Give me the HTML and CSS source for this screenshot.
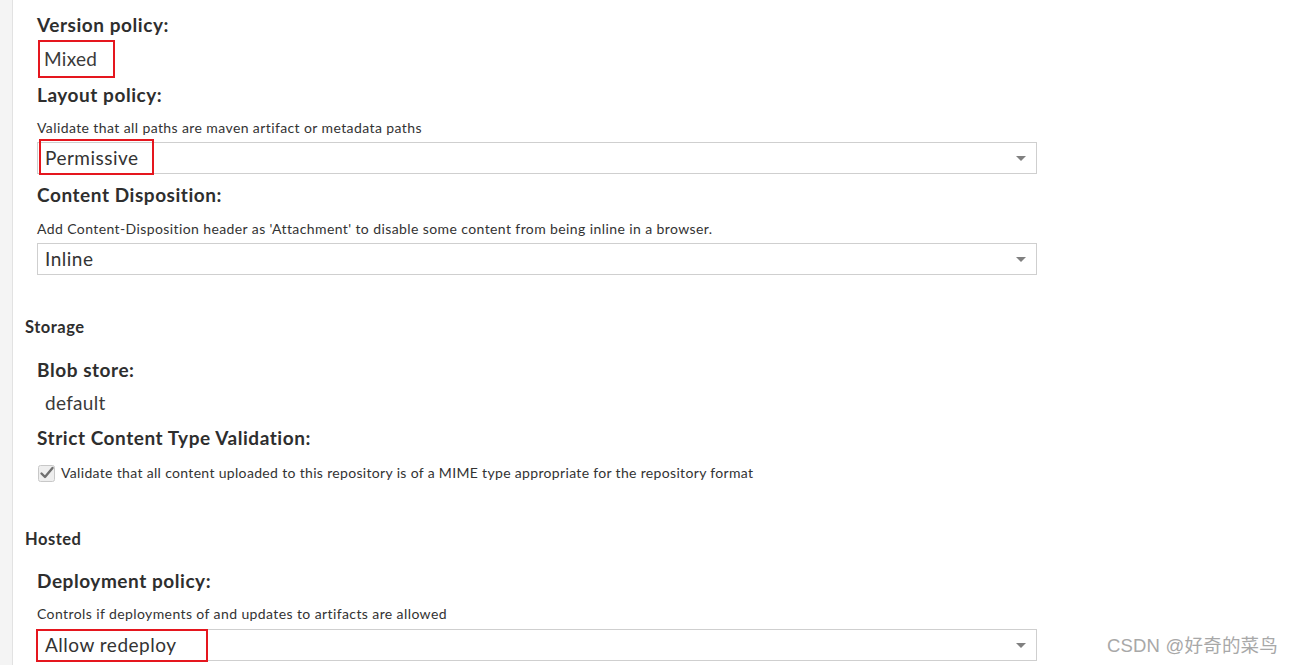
FILE: index.html
```html
<!DOCTYPE html>
<html>
<head>
<meta charset="utf-8">
<link rel="stylesheet" href="styles.css">
</head>
<body>
<div class="page">
  <div class="rail"></div>
  <div class="main">
    <div class="field f-version">
      <div class="label">Version policy:</div>
      <div class="static boxed">Mixed</div>
    </div>
    <div class="field f-layout">
      <div class="label">Layout policy:</div>
      <div class="desc">Validate that all paths are maven artifact or metadata paths</div>
      <div class="select"><span class="sel-text">Permissive</span><span class="arrow"></span><span class="mark mark-perm"></span></div>
    </div>
    <div class="field f-disp">
      <div class="label">Content Disposition:</div>
      <div class="desc">Add Content-Disposition header as 'Attachment' to disable some content from being inline in a browser.</div>
      <div class="select"><span class="sel-text">Inline</span><span class="arrow"></span></div>
    </div>

    <div class="section s-storage">Storage</div>
    <div class="field f-blob">
      <div class="label">Blob store:</div>
      <div class="static">default</div>
    </div>
    <div class="field f-strict">
      <div class="label">Strict Content Type Validation:</div>
      <div class="check-row">
        <svg class="check" width="17" height="17" viewBox="0 0 17 17"><rect x="0.5" y="0.5" width="16" height="16" rx="2" fill="#eeeeee" stroke="#c8c8c8"/><path d="M3.5 8.5 L7 12 L14.5 3" fill="none" stroke="#6f6f6f" stroke-width="2.4" stroke-linecap="round" stroke-linejoin="round"/></svg>
        <span class="check-text">Validate that all content uploaded to this repository is of a MIME type appropriate for the repository format</span>
      </div>
    </div>

    <div class="section s-hosted">Hosted</div>
    <div class="field f-deploy">
      <div class="label">Deployment policy:</div>
      <div class="desc">Controls if deployments of and updates to artifacts are allowed</div>
      <div class="select"><span class="sel-text">Allow redeploy</span><span class="arrow"></span><span class="mark mark-deploy"></span></div>
    </div>
  </div>
  <div class="watermark">CSDN @好奇的菜鸟</div>
</div>
</body>
</html>
```
FILE: styles.css
```css
* { box-sizing: border-box; }
html, body { margin: 0; padding: 0; background: #fff; }
body {
  font-family: Lato, "Noto Sans", "Noto Sans CJK SC", sans-serif;
  color: #333;
  width: 1294px;
  height: 665px;
  overflow: hidden;
}
.page { display: flex; height: 665px; position: relative; }
.rail {
  width: 13px;
  flex: none;
  background: #f4f4f4;
  border-right: 1px solid #e2e2e2;
}
.main { flex: 1; padding-top: 13px; }
.field { padding-left: 24px; }
.label {
  font-size: 19px;
  font-weight: 700;
  line-height: 24px;
  letter-spacing: 0.55px;
  color: #2e2e2e;
}
.desc {
  font-size: 14px;
  line-height: 18px;
  letter-spacing: 0.4px;
  margin-top: 12px;
  color: #333;
}
.static {
  font-size: 19px;
  line-height: 22px;
  letter-spacing: 0.3px;
  color: #3a3a3a;
  padding-left: 8px;
  margin-top: 10px;
}
.static.boxed {
  display: inline-block;
  margin-top: 3px;
  margin-left: 1px;
  padding: 6px 16px 6px 4px;
  border: 2px solid #e5161e;
  line-height: 22px;
  height: 38px;
}
.select {
  position: relative;
  width: 1000px;
  height: 32px;
  margin-top: 5px;
  border: 1px solid #cfcfcf;
  padding-left: 7px;
  font-size: 19px;
  line-height: 30px;
  letter-spacing: 0.5px;
  color: #333;
}
.arrow {
  position: absolute;
  right: 10px;
  top: 13px;
  width: 0;
  height: 0;
  border-left: 5px solid transparent;
  border-right: 5px solid transparent;
  border-top: 5px solid #808080;
}
.mark {
  position: absolute;
  border: 2px solid #e5161e;
}
.mark-perm { left: 1px; top: -4px; width: 115px; height: 36px; }
.mark-deploy { left: -2px; top: -1px; width: 172px; height: 33px; }

.f-layout { margin-top: 5px; }
.f-disp { margin-top: 9px; }
.f-disp .desc { margin-top: 13px; }
.section {
  padding-left: 12px;
  font-size: 16.5px;
  font-weight: 700;
  line-height: 20px;
  letter-spacing: 0.5px;
  color: #2e2e2e;
}
.s-storage { margin-top: 42px; }
.f-blob { margin-top: 21px; }
.f-strict { margin-top: 12px; }
.check-row {
  display: flex;
  align-items: center;
  gap: 6px;
  margin-top: 14px;
  height: 18px;
  padding-left: 1px;
}
.check { flex: none; }
.check-text { font-size: 14px; line-height: 18px; letter-spacing: 0.33px; }
.s-hosted { margin-top: 47px; }
.f-deploy { margin-top: 20px; }
.f-deploy .desc { margin-top: 12px; }
.f-deploy .select { margin-top: 6px; }

.watermark {
  position: absolute;
  right: 16px;
  top: 634px;
  font-family: "Liberation Sans", "Noto Sans CJK SC", sans-serif;
  font-size: 18.5px;
  line-height: 24px;
  letter-spacing: 0.2px;
  color: #a8a8a8;
}
```
